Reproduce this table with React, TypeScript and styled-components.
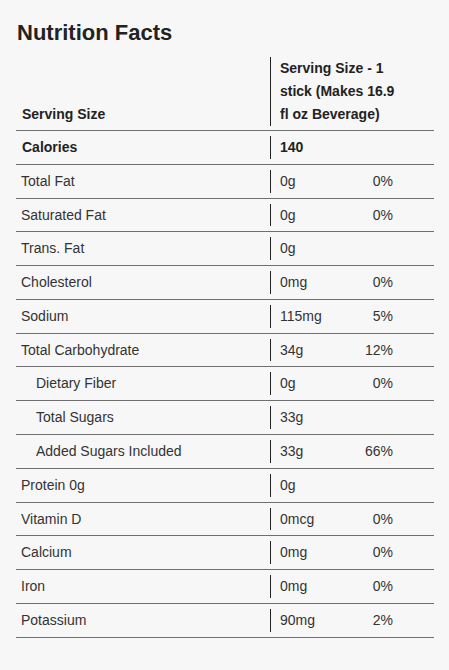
import styled, { createGlobalStyle } from "styled-components";

type Nutrient = {
  label: string;
  amount: string;
  percent?: string;
  indent?: boolean;
};

const nutrients: Nutrient[] = [
  { label: "Total Fat", amount: "0g", percent: "0%" },
  { label: "Saturated Fat", amount: "0g", percent: "0%" },
  { label: "Trans. Fat", amount: "0g" },
  { label: "Cholesterol", amount: "0mg", percent: "0%" },
  { label: "Sodium", amount: "115mg", percent: "5%" },
  { label: "Total Carbohydrate", amount: "34g", percent: "12%" },
  { label: "Dietary Fiber", amount: "0g", percent: "0%", indent: true },
  { label: "Total Sugars", amount: "33g", indent: true },
  { label: "Added Sugars Included", amount: "33g", percent: "66%", indent: true },
  { label: "Protein 0g", amount: "0g" },
  { label: "Vitamin D", amount: "0mcg", percent: "0%" },
  { label: "Calcium", amount: "0mg", percent: "0%" },
  { label: "Iron", amount: "0mg", percent: "0%" },
  { label: "Potassium", amount: "90mg", percent: "2%" },
];

const GlobalStyle = createGlobalStyle`
  html, body {
    margin: 0;
    padding: 0;
    background: #f7f7f7;
    font-family: "Liberation Sans", Arial, sans-serif;
    color: #333;
  }
`;

const Page = styled.main`
  padding: 20px 15px 30px 16px;
`;

const Title = styled.h2`
  margin: 0 0 12px 1px;
  font-size: 22px;
  line-height: 25px;
  font-weight: 700;
  color: #222;
`;

const Table = styled.div`
  display: grid;
  grid-template-columns: 254px 93px 1fr;
  width: 418px;
  font-size: 14px;
`;

const Row = styled.div`
  display: contents;
`;

const Cell = styled.div<{ $bold?: boolean; $indent?: boolean }>`
  padding: 5px 0 5px ${(p) => (p.$indent ? "20px" : "5px")};
  line-height: 22.78px;
  border-bottom: 1px solid #6f6f6f;
  font-weight: ${(p) => (p.$bold ? 700 : 400)};
  color: ${(p) => (p.$bold ? "#222" : "#333")};
`;

const HeadLabel = styled(Cell)`
  display: flex;
  align-items: flex-end;
  padding: 0 0 4px 6px;
`;

const ValueCell = styled.div<{ $bold?: boolean }>`
  padding: 5px 0;
  border-bottom: 1px solid #6f6f6f;
  font-weight: ${(p) => (p.$bold ? 700 : 400)};
  color: ${(p) => (p.$bold ? "#222" : "#333")};
`;

const ValueInner = styled.div`
  border-left: 1px solid #222;
  padding-left: 9px;
  line-height: 22.78px;
  min-height: 22.78px;
`;

const HeadValue = styled.div`
  grid-column: 2 / 4;
  padding: 0 0 4px;
  border-bottom: 1px solid #6f6f6f;
  font-weight: 700;
  color: #222;
`;

const HeadInner = styled(ValueInner)`
  max-width: 120px;
  line-height: 23px;
`;

const PercentCell = styled(Cell)`
  padding-left: 0;
  padding-right: 41px;
  text-align: right;
`;

export default function App() {
  return (
    <Page>
      <GlobalStyle />
      <Title>Nutrition Facts</Title>
      <Table>
        <Row>
          <HeadLabel $bold>Serving Size</HeadLabel>
          <HeadValue>
            <HeadInner>Serving Size - 1 stick (Makes 16.9 fl oz Beverage)</HeadInner>
          </HeadValue>
        </Row>
        <Row>
          <Cell $bold style={{ paddingLeft: 6 }}>Calories</Cell>
          <ValueCell $bold>
            <ValueInner>140</ValueInner>
          </ValueCell>
          <PercentCell />
        </Row>
        {nutrients.map((n) => (
          <Row key={n.label}>
            <Cell $indent={n.indent}>{n.label}</Cell>
            <ValueCell>
              <ValueInner>{n.amount}</ValueInner>
            </ValueCell>
            <PercentCell>{n.percent}</PercentCell>
          </Row>
        ))}
      </Table>
    </Page>
  );
}
